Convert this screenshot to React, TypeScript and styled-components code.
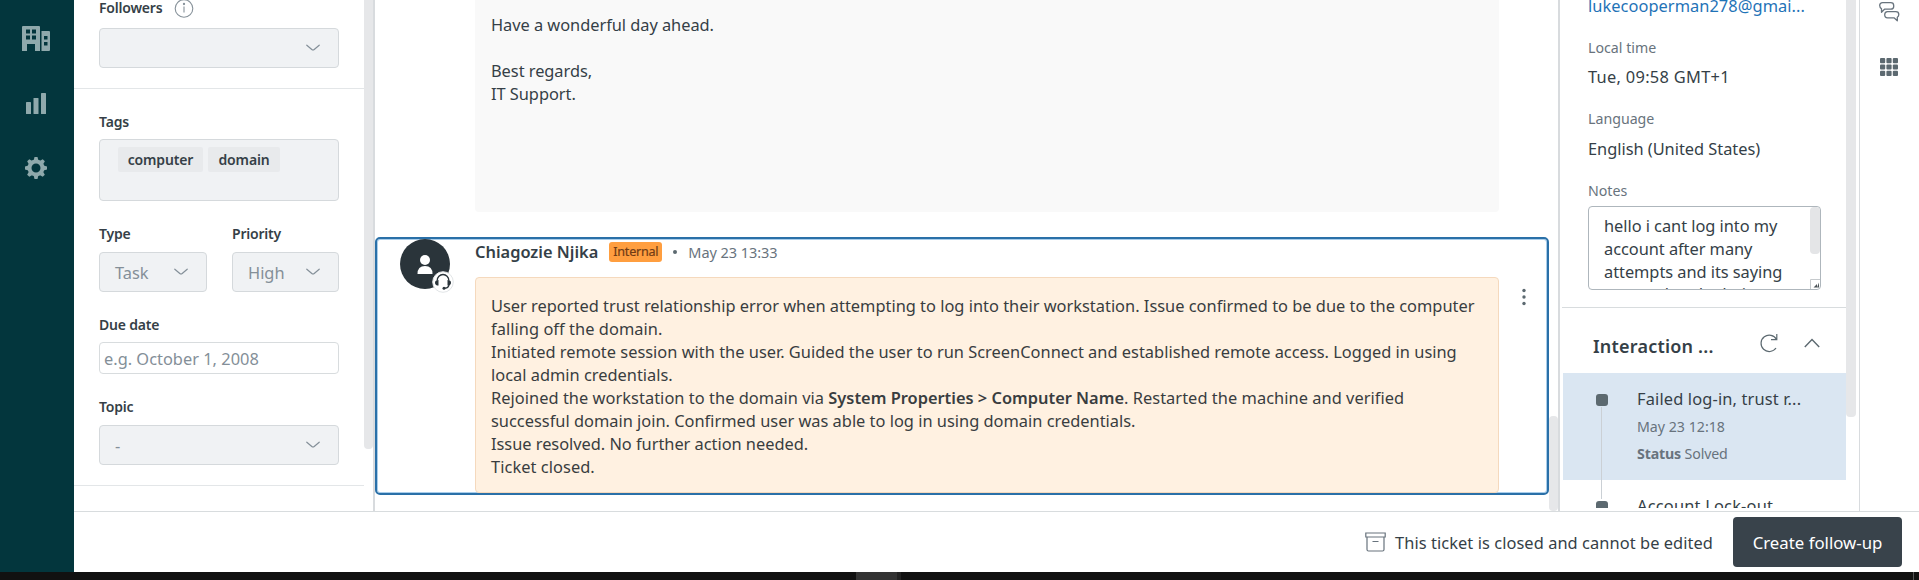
import React from 'react';
import styled, { createGlobalStyle } from 'styled-components';

const GlobalStyle = createGlobalStyle`
  * { box-sizing: border-box; }
  body { margin: 0; overflow: hidden; background: #fff; }
  svg { display: block; flex: none; }
`;

const Page = styled.div`
  width: 1919px;
  height: 580px;
  display: flex;
  flex-direction: column;
  overflow: hidden;
  font-family: 'Noto Sans', 'Open Sans', sans-serif;
  font-size: 16.4px;
  color: #353f47;
`;
const Workspace = styled.div`
  display: flex;
  height: 572px;
`;
const NavRail = styled.nav`
  width: 74px;
  background: #03363d;
  display: flex;
  flex-direction: column;
  align-items: center;
  color: #8fa9ac;
`;
const NavItem = styled.div<{ $top: number }>`
  margin-top: ${p => p.$top}px;
  margin-right: 2px;
`;
const Main = styled.div`
  flex: 1;
  display: flex;
  flex-direction: column;
  min-width: 0;
`;
const Columns = styled.div`
  height: 511px;
  display: flex;
  overflow: hidden;
`;
const Text = styled.span<{ $size?: number; $color?: string; $weight?: number; $gap?: number }>`
  white-space: nowrap;
  font-size: ${p => p.$size ?? 16.4}px;
  color: ${p => p.$color ?? '#353f47'};
  font-weight: ${p => p.$weight ?? 400};
  letter-spacing: ${p => p.$gap ?? 0}px;
`;

const FieldsPanel = styled.aside`
  width: 290px;
  overflow: hidden;
`;
const FieldGroup = styled.section<{ $h: number }>`
  display: flow-root;
  height: ${p => p.$h}px;
  padding: 0 25px;
  border-bottom: 1px solid #e3e6e8;
`;
const Label = styled.div<{ $top?: number; $h: number }>`
  margin-top: ${p => p.$top ?? 0}px;
  height: ${p => p.$h}px;
  line-height: 20px;
  display: flex;
  font-size: 14px;
  font-weight: 600;
  letter-spacing: -0.2px;
`;
const InfoIcon = styled.svg`
  margin: 0 0 0 12px;
`;
const Select = styled.div`
  height: 40px;
  border: 1px solid #d5d9dc;
  border-radius: 4px;
  background: #f0f2f4;
  padding: 0 18px 0 15px;
  display: flex;
  align-items: center;
  justify-content: space-between;
  color: #848f98;
`;
const TagBox = styled.div`
  height: 62px;
  border: 1px solid #d5d9dc;
  border-radius: 4px;
  background: #f0f2f4;
  padding: 7px 18px;
  display: flex;
  align-items: flex-start;
  gap: 5px;
`;
const Tag = styled.span<{ $w: number }>`
  width: ${p => p.$w}px;
  height: 25px;
  line-height: 25px;
  border-radius: 2px;
  background: #e8eaec;
  text-align: center;
  font-size: 14px;
  font-weight: 600;
  letter-spacing: -0.15px;
`;
const Split = styled.div`
  display: grid;
  grid-template-columns: 108px 107px;
  column-gap: 25px;
`;
const DateInput = styled.div`
  height: 32px;
  line-height: 31px;
  border: 1px solid #d8dcde;
  border-radius: 4px;
  padding-left: 4px;
  color: #848f98;
`;
const Track = styled.div<{ $w: number; $start?: number; $h: number }>`
  width: ${p => p.$w}px;
  flex: none;
  &::before {
    content: '';
    display: block;
    margin-top: ${p => p.$start ?? 0}px;
    height: ${p => p.$h}px;
    background: #e6e7e9;
    border-radius: ${p => (p.$start ? '4px' : '0 0 4px 4px')};
  }
`;
const VLine = styled.div<{ $w: number; $left?: number }>`
  width: ${p => p.$w}px;
  margin-left: ${p => p.$left ?? 0}px;
  background: #d8dbde;
  flex: none;
`;

const Conversation = styled.main`
  width: 1174px;
  display: flex;
  flex-direction: column;
`;
const PublicMessage = styled.div`
  margin-left: 100px;
  width: 1024px;
  height: 212px;
  background: #f9f9f9;
  border-radius: 0 0 4px 4px;
  padding: 13px 16px;
  line-height: 23px;
  letter-spacing: -0.04px;
  white-space: pre-line;
`;
const ActiveComment = styled.article`
  margin-top: 25px;
  height: 258px;
  border: 2px solid #2a70a8;
  border-radius: 5px;
  box-shadow: inset 0 0 0 1px #a9cdea;
  display: flex;
  padding-left: 23px;
`;
const AvatarSlot = styled.div`
  position: relative;
  width: 75px;
`;
const AgentBadge = styled.svg`
  position: absolute;
  left: 32px;
  top: 32px;
`;
const CommentBody = styled.div`
  width: 1024px;
`;
const CommentHead = styled.header`
  height: 38px;
  padding-bottom: 13px;
  display: flex;
  align-items: center;
`;
const InternalBadge = styled.span`
  width: 53px;
  height: 20px;
  margin: 1px 11px 0 11px;
  background: #ff9e3f;
  border-radius: 3px;
  color: #703b15;
  font-size: 12.6px;
  line-height: 20px;
  text-align: center;
  letter-spacing: -0.25px;
  -webkit-text-stroke: 0.2px #703b15;
`;
const Bullet = styled.i`
  width: 4px;
  height: 4px;
  border-radius: 50%;
  background: #5c6970;
  margin-right: 11px;
`;
const Note = styled.div`
  height: 216px;
  border: 1px solid #f5d9bd;
  border-radius: 4px;
  background: #fff1e1;
  padding: 16px 15px;
  line-height: 23px;
  color: #393d3f;
`;
const NoteLine = styled.div<{ $gap: number }>`
  white-space: nowrap;
  letter-spacing: ${p => p.$gap}px;
  b { font-weight: 600; letter-spacing: 0; }
`;
const CommentMenu = styled.div`
  flex: 1;
  display: flex;
  justify-content: center;
  padding: 49px 0 0 2px;
`;

const ContextPanel = styled.aside`
  width: 286px;
  padding-left: 2px;
  display: flex;
  flex-direction: column;
  overflow: hidden;
`;
const Profile = styled.section`
  display: flow-root;
  height: 308px;
  padding: 0 24px 0 26px;
  border-bottom: 1px solid #d8dcde;
`;
const ProfileRow = styled.div<{ $h: number; $top?: number }>`
  margin-top: ${p => p.$top ?? 0}px;
  height: ${p => p.$h}px;
  line-height: 24px;
  white-space: nowrap;
`;
const Notes = styled.div`
  width: 233px;
  height: 84px;
  border: 1px solid #aeb6bc;
  border-radius: 4px;
  display: flex;
  overflow: hidden;
`;
const NotesText = styled.div`
  width: 222px;
  padding: 8px 0 0 15px;
  line-height: 22.8px;
  letter-spacing: -0.05px;
  white-space: pre;
`;
const NotesScroll = styled.div`
  width: 10px;
  display: flex;
  flex-direction: column;
  justify-content: space-between;
`;
const NotesThumb = styled.div`
  height: 47px;
  border-radius: 4px;
  background: #e4e5e7;
`;
const InteractionHead = styled.header`
  height: 65px;
  padding: 10px 26px 0 31px;
  display: flex;
  align-items: center;
`;
const Refresh = styled.svg`
  margin-left: auto;
  margin-right: 26px;
  margin-top: -5px;
`;
const Collapse = styled.svg`
  margin-top: -5px;
`;
const EventList = styled.div`
  height: 135px;
  overflow: hidden;
`;
const Event = styled.div<{ $active?: boolean }>`
  height: 107px;
  margin-left: 1px;
  background: ${p => (p.$active ? '#dae6f2' : '#fff')};
  display: flex;
`;
const Timeline = styled.div`
  width: 74px;
  padding-left: 33px;
  padding-top: 21px;
`;
const Marker = styled.div`
  width: 12px;
  height: 12px;
  border-radius: 3px;
  background: #5c6970;
`;
const Connector = styled.div`
  width: 1px;
  height: 92px;
  margin: 1px 0 0 5px;
  background: #cbd0d5;
  position: relative;
`;
const EventText = styled.div`
  padding-top: 13px;
  display: flex;
  flex-direction: column;
  line-height: 26px;
  gap: 1.5px;
`;
const AppsRail = styled.aside`
  width: 58px;
  display: flex;
  flex-direction: column;
  padding-left: 18px;
  gap: 36px;
`;

const Footer = styled.footer`
  height: 61px;
  border-top: 1px solid #d8dcde;
  display: flex;
  align-items: center;
  justify-content: flex-end;
  padding-right: 17px;
`;
const ArchiveIcon = styled.svg`
  margin-right: 9px;
`;
const FollowUp = styled.button`
  width: 169px;
  height: 50px;
  margin-left: 20px;
  padding: 0;
  border: 0;
  border-radius: 4px;
  background: #39434b;
  color: #fff;
  font: 400 16.8px 'Noto Sans', sans-serif;
`;
const Taskbar = styled.div`
  height: 8px;
  background: #111;
  display: flex;
`;
const TaskItem = styled.div<{ $left: number; $w: number; $c: string }>`
  margin-left: ${p => p.$left}px;
  width: ${p => p.$w}px;
  background: ${p => p.$c};
`;

const Chevron = () => (
  <svg width="14" height="8" viewBox="0 0 14 8" fill="none" stroke="#848f98" strokeWidth="1.2" strokeLinecap="round">
    <path d="M0.8 1.2 5.8 5.5Q7 6.4 8.2 5.5L13.2 1.2" />
  </svg>
);

const noteLines: { gap: number; content: React.ReactNode }[] = [
  { gap: 0, content: 'User reported trust relationship error when attempting to log into their workstation. Issue confirmed to be due to the computer' },
  { gap: 0.05, content: 'falling off the domain.' },
  { gap: 0.01, content: 'Initiated remote session with the user. Guided the user to run ScreenConnect and established remote access. Logged in using' },
  { gap: 0, content: 'local admin credentials.' },
  { gap: 0.04, content: <>Rejoined the workstation to the domain via <b>System Properties &gt; Computer Name</b>. Restarted the machine and verified</> },
  { gap: 0, content: 'successful domain join. Confirmed user was able to log in using domain credentials.' },
  { gap: -0.03, content: 'Issue resolved. No further action needed.' },
  { gap: 0.06, content: 'Ticket closed.' },
];

export default function App() {
  return (
    <Page>
      <GlobalStyle />
      <Workspace>
        <NavRail>
          <NavItem $top={26}>
            <svg width="28" height="25" viewBox="0 0 28 25" fill="currentColor" fillRule="evenodd">
              <path d="M1 0h16q1 0 1 1v24h-5v-7H5v7H0V1q0-1 1-1ZM4 3.500v4h4v-4Zm6 0v4h4v-4ZM4 9.500v4h4v-4Zm6 0v4h4v-4ZM19.500 5H27q1 0 1 1v18q0 1-1 1h-7.500ZM22 10v3.500h3.500V10Zm0 6v3.500h3.500V16Z" />
            </svg>
          </NavItem>
          <NavItem $top={42}>
            <svg width="20" height="21" viewBox="0 0 20 21" fill="currentColor">
              <rect x="0" y="9" width="5" height="12" rx=".6" />
              <rect x="7.500" y="5" width="5" height="16" rx=".6" />
              <rect x="15" y="0" width="5" height="21" rx=".6" />
            </svg>
          </NavItem>
          <NavItem $top={43}>
            <svg width="22" height="22" viewBox="-11 -11 22 22" fill="currentColor">
              <circle r="6.500" fill="none" stroke="currentColor" strokeWidth="4" />
              {[0, 45, 90, 135, 180, 225, 270, 315].map(a => (
                <path key={a} d="M-2.400-7.500-1.500-11h3L2.400-7.500Z" transform={`rotate(${a})`} />
              ))}
            </svg>
          </NavItem>
        </NavRail>
        <Main>
          <Columns>
            <FieldsPanel>
              <FieldGroup $h={89}>
                <Label $top={-2} $h={30}>
                  Followers
                  <InfoIcon width="20" height="20" viewBox="0 0 20 20" fill="none" stroke="#87929a" strokeWidth="1.100">
                    <circle cx="10" cy="10.500" r="8.800" />
                    <path d="M10 8.500v6" />
                    <circle cx="10" cy="6" r=".6" fill="#87929a" />
                  </InfoIcon>
                </Label>
                <Select><span /><Chevron /></Select>
              </FieldGroup>
              <FieldGroup $h={397}>
                <Label $top={23} $h={27}>Tags</Label>
                <TagBox>
                  <Tag $w={85}>computer</Tag>
                  <Tag $w={72}>domain</Tag>
                </TagBox>
                <Split>
                  <div>
                    <Label $top={23} $h={28}>Type</Label>
                    <Select>Task<Chevron /></Select>
                  </div>
                  <div>
                    <Label $top={23} $h={28}>Priority</Label>
                    <Select>High<Chevron /></Select>
                  </div>
                </Split>
                <Label $top={23} $h={27}>Due date</Label>
                <DateInput>e.g. October 1, 2008</DateInput>
                <Label $top={23} $h={28}>Topic</Label>
                <Select>-<Chevron /></Select>
              </FieldGroup>
            </FieldsPanel>
            <Track $w={9} $h={449} />
            <VLine $w={2} />
            <Conversation>
              <PublicMessage>{'Have a wonderful day ahead.\n\nBest regards,\nIT Support.'}</PublicMessage>
              <ActiveComment>
                <AvatarSlot>
                  <svg width="50" height="50" viewBox="0 0 50 50">
                    <circle cx="25" cy="25" r="25" fill="#2a343a" />
                    <circle cx="25" cy="21" r="5" fill="#fff" />
                    <path d="M17.500 35q0-8 7.500-8t7.500 8Z" fill="#fff" />
                  </svg>
                  <AgentBadge width="22" height="22" viewBox="0 0 22 22" fill="none">
                    <circle cx="11" cy="11" r="10.300" fill="#fff" stroke="#e2e5e7" />
                    <path d="M5.200 9.500a5.800 6 0 0 1 11.600 0M17 13q0 4-4 4.200" stroke="#2a343a" strokeWidth="1.300" />
                    <path d="M6.500 9v5.500Q3 14.500 3 11.700 3 9.200 6.500 9ZM15.500 9v5.500q3.500 0 3.500-2.800 0-2.500-3.500-2.700Z" fill="#2a343a" />
                    <circle cx="12" cy="17.200" r="1.500" fill="#2a343a" />
                  </AgentBadge>
                </AvatarSlot>
                <CommentBody>
                  <CommentHead>
                    <Text $weight={600}>Chiagozie Njika</Text>
                    <InternalBadge>Internal</InternalBadge>
                    <Bullet />
                    <Text $size={14.5} $color="#68737d" $gap={-0.05}>May 23 13:33</Text>
                  </CommentHead>
                  <Note>
                    {noteLines.map((l, i) => <NoteLine key={i} $gap={l.gap}>{l.content}</NoteLine>)}
                  </Note>
                </CommentBody>
                <CommentMenu>
                  <svg width="4" height="18" viewBox="0 0 4 18" fill="#5c6970">
                    <circle cx="2" cy="2.500" r="1.700" /><circle cx="2" cy="9" r="1.700" /><circle cx="2" cy="15.500" r="1.700" />
                  </svg>
                </CommentMenu>
              </ActiveComment>
            </Conversation>
            <Track $w={9} $start={416} $h={95} />
            <VLine $w={2} />
            <ContextPanel>
              <Profile>
                <ProfileRow $top={-6} $h={41}><Text $color="#1f73b7" $gap={0.05}>lukecooperman278@gmai...</Text></ProfileRow>
                <ProfileRow $h={30}><Text $size={14.2} $color="#68737d">Local time</Text></ProfileRow>
                <ProfileRow $h={41}><Text $gap={0.3}>Tue, 09:58 GMT+1</Text></ProfileRow>
                <ProfileRow $h={31}><Text $size={14.2} $color="#68737d">Language</Text></ProfileRow>
                <ProfileRow $h={41}><Text $gap={-0.03}>English (United States)</Text></ProfileRow>
                <ProfileRow $h={28}><Text $size={14.2} $color="#68737d">Notes</Text></ProfileRow>
                <Notes>
                  <NotesText>{'hello i cant log into my\naccount after many\nattempts and its saying\ncontact head admin'}</NotesText>
                  <NotesScroll>
                    <NotesThumb />
                    <svg width="10" height="10" viewBox="0 0 10 10"><path d="M.5 10V.5H10" fill="none" stroke="#c6cacd" /><path d="M9 3.500v5H7zM3.500 8.500 7 5v3.500z" fill="#4b5357" /></svg>
                  </NotesScroll>
                </Notes>
              </Profile>
              <InteractionHead>
                <Text $size={18} $weight={600} $gap={0.2}>Interaction ...</Text>
                <Refresh width="18" height="20" viewBox="0 0 18 20" fill="none" stroke="#5c6970" strokeWidth="1.200">
                  <path d="M16.500 6.500A8.200 8.200 0 1 0 16 15M16.800 1v5.700H11" />
                </Refresh>
                <Collapse width="16" height="10" viewBox="0 0 16 10" fill="none" stroke="#5c6970" strokeWidth="1.400">
                  <path d="M.8 9 8 1.500 15.200 9" />
                </Collapse>
              </InteractionHead>
              <EventList>
                <Event $active>
                  <Timeline><Marker /><Connector /></Timeline>
                  <EventText>
                    <Text $gap={0.15}>Failed log-in, trust r...</Text>
                    <Text $size={14.2} $color="#68737d">May 23 12:18</Text>
                    <Text $size={14.2} $color="#68737d" $gap={-0.15}><b>Status</b> Solved</Text>
                  </EventText>
                </Event>
                <Event>
                  <Timeline><Marker /></Timeline>
                  <EventText><Text $gap={0.2}>Account Lock-out</Text></EventText>
                </Event>
              </EventList>
            </ContextPanel>
            <Track $w={10} $h={417} />
            <VLine $w={1} $left={3} />
            <AppsRail>
              <svg width="22" height="22" viewBox="0 0 22 22" fill="none" stroke="#68737d" strokeWidth="1.300" strokeLinejoin="round">
                <path d="M9.500 9.200H6.500L3.500 12.200V8.800Q1.700 7.500 1.700 5.600 1.700 2.700 4.700 2.700h8q3 0 3 2.700v1Q15.700 9.200 12.700 9.200Z" />
                <path d="M9.500 11.700h8.300q3 0 3 2.800 0 1.900-1.500 2.700v3.600l-3.300-3H9.500q-2.800 0-2.800-3t2.800-3.100Z" fill="#fff" />
              </svg>
              <svg width="20" height="18" viewBox="-1 0 20 18" fill="#5c6970">
                {[0, 6.4, 12.8].map(y => [0, 6.4, 12.8].map(x => (
                  <rect key={`${x}-${y}`} x={x + 1} y={y} width="5.200" height="5.200" rx="1" />
                )))}
              </svg>
            </AppsRail>
          </Columns>
          <Footer>
            <ArchiveIcon width="21" height="20" viewBox="0 0 21 20" fill="none" stroke="#68737d" strokeWidth="1.200">
              <path d="M.8 1h19.400v4H.8ZM2 5v12.500q0 1.500 1.500 1.500h14q1.500 0 1.500-1.500V5M7.500 9.500h6" />
            </ArchiveIcon>
            <Text $gap={0.07}>This ticket is closed and cannot be edited</Text>
            <FollowUp>Create follow-up</FollowUp>
          </Footer>
        </Main>
      </Workspace>
      <Taskbar>
        <TaskItem $left={856} $w={41} $c="#333" />
        <TaskItem $left={0} $w={4} $c="#222" />
        <TaskItem $left={1012} $w={1} $c="#555" />
      </Taskbar>
    </Page>
  );
}
